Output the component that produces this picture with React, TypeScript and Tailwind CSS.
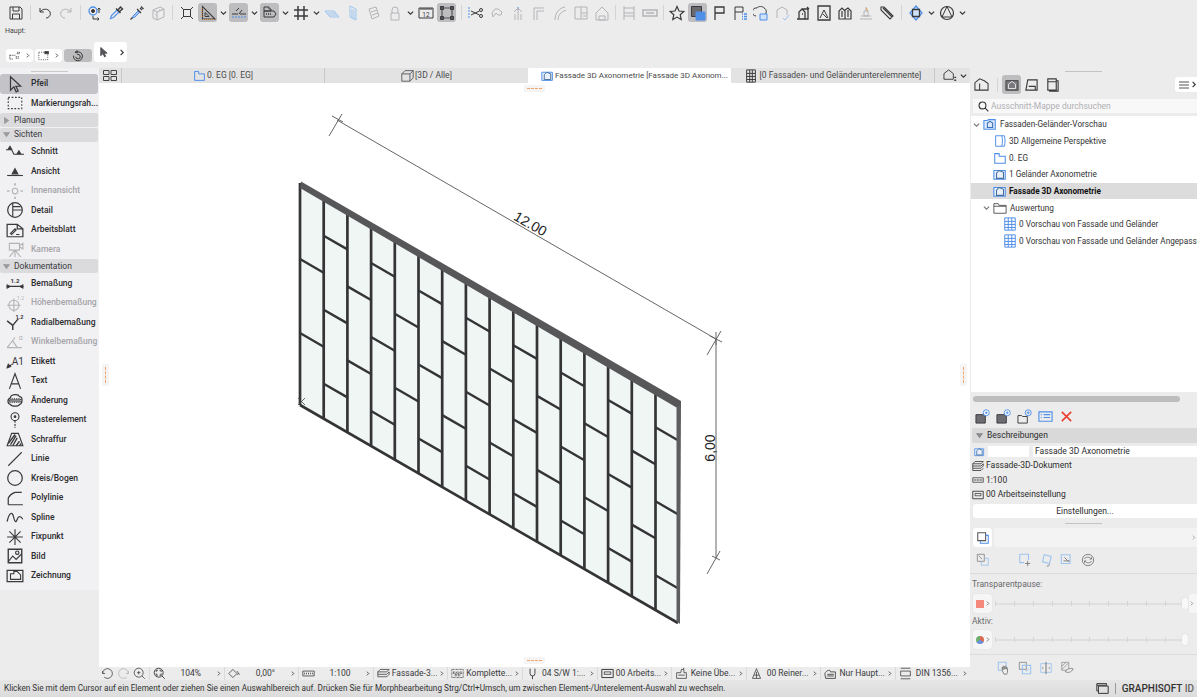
import React from 'react';

const DK = '#3a3a3c';
const BL = '#4f8fe8';
const LB = '#9cc3f0';
const GR = '#b4b4b8';

// toolbar + panel glyphs, all on a 16 grid
const ICONS: Record<string, React.ReactNode> = {
  save: <path d="M2 2h10l2 2v10H2z M5 2v4h6V2 M4.5 14V9h7v5" />,
  undo: <path d="M3 3v4h4 M3 7c2.500-3.500 8-4 10 0 1.200 3-1 6-4 6" />,
  redo: <path stroke={GR} d="M13 3v4H9 M13 7c-2.500-3.500-8-4-10 0-1.200 3 1 6 4 6" />,
  pick: <><circle cx="6" cy="6" r="4" stroke={BL} strokeWidth="1.300" /><circle cx="6" cy="6" r="1.500" fill={DK} /><path d="M12 3v5 M10.500 4.500L12 3l1.500 1.500 M6 11v3h6 M10.500 12.500L12 14l-1.500 1.500" /></>,
  dropper: <><path d="M2.500 13.500l1-3 5.500-5.500 2 2-5.500 5.500z" stroke={BL} strokeWidth="1.200" /><path d="M8 3.500l4.500 4.500 M10 5l2.500-3 2 2-3 2.500" strokeWidth="1.400" /></>,
  syringe: <><path d="M4 11l5-5 1.500 1.500-5 5-2 .5z" fill={LB} stroke={BL} /><path d="M1.500 14.500l2-2 M8 4l4 4 M11 3l2 2 M12 1.500l2.500 2.500" strokeWidth="1.200" /></>,
  box3d: <g stroke={GR}><path d="M3 5l7-3 4 2v8l-7 3-4-2z M3 5l4 2v8 M7 7l7-3" /><path d="M5 9l2 2 M9 5h3" strokeDasharray="1 1" /></g>,
  target: <path d="M4.500 4.500h7v7h-7z M2 2l3 3 M14 2l-3 3 M2 14l3-3 M14 14l-3-3" />,
  setsq: <><path d="M2.500 1.500v12.500H15z" strokeWidth="1.100" /><path d="M5 7.500v4h4.200z" /><path d="M3 14.500h11 M2 3v10" stroke="#e69a4a" strokeDasharray="1 1" /></>,
  guide: <><path d="M1 9h6 M9 9h6 M5 6l3-3 M8 9l3-4" /><path d="M1 12h14" stroke={BL} strokeDasharray="2 1" /></>,
  layer: <><path d="M2 2h5v2h2v2H2z M2 6h10l2 3-2 3H2z" /><path d="M4 9h5" strokeWidth="1.500" strokeDasharray="1 1" /></>,
  grid: <path d="M5 1v14 M11 1v14 M1 5h14 M1 11h14" strokeWidth="1.500" />,
  plane: <path stroke={LB} d="M1 6h9l5 6H6z M3 8h9 M5 10h8" />,
  wall: <path stroke={LB} d="M5 1l6 3v11l-6-3z M7 4v9 M9 5v9" />,
  hatch: <path stroke={GR} d="M3 4l7-2 3 9-7 3z M5 7l6-2 M6 10l6-2" />,
  lock: <path stroke={GR} d="M5 8V5a3 3 0 0 1 6 0v3 M4 8h8v7H4z" />,
  ruler: <><path d="M1 3h14v10H1z" /><path d="M3 3v2 M5 3v2 M7 3v2 M9 3v2 M11 3v2 M13 3v2" /><text x="8" y="12" textAnchor="middle" fontSize="6.500" fill={DK} stroke="none">12</text></>,
  nodes: <><path d="M3 3h10v10H3z" stroke="#55555a" strokeWidth="1.200" /><path d="M1.500 1.500h3v3h-3z M11.500 1.500h3v3h-3z M1.500 11.500h3v3h-3z M11.500 11.500h3v3h-3z" fill="#55555a" /></>,
  scissors: <><path d="M1 2v12" stroke={BL} strokeDasharray="2 1" /><circle cx="13" cy="5" r="1.500" /><circle cx="13" cy="11" r="1.500" /><path d="M3 6l8.500 4 M3 10l8.500-4" /></>,
  wand: <path stroke={GR} d="M3 8l3-4h3l4 3-1 3H9L7 8 4 12z" />,
  trim: <><path d="M8 2v3" stroke={BL} /><path stroke={GR} d="M4 7l4-4 4 4 M8 4v11 M5 9v6 M11 9v6" /></>,
  corner: <path stroke={GR} d="M3 15V3h10 M6 15V6h7" />,
  curve: <path stroke={GR} d="M3 15C3 8 7 3 13 2 M6 15c0-5 3-8 8-10" />,
  split: <path stroke={GR} d="M2 2h12v12H2z M8 2v12 M8 8h6 M10 11h3" />,
  house: <path stroke={GR} d="M2 8l6-6 6 6v7H2z M5 11h6v4H5z" />,
  beam: <path stroke={GR} d="M3 1v14 M13 1v14 M3 3h10 M3 11h10 M3 8h10" />,
  slab: <path stroke={GR} d="M1 5h14v6H1z M4 8h8" strokeWidth="1.500" />,
  star: <path d="M8 1.500l2 4.500 4.800.5-3.600 3.200 1 4.800L8 12.100 3.800 14.500l1-4.800L1.200 6.500 6 6z" strokeWidth="1.200" />,
  layers2: <><path d="M1.500 1.500h10v10h-10z" fill="#6a6a6e" stroke="#3a3a3c" /><path d="M6 7h9v8H6z" fill={BL} stroke={BL} /></>,
  flag: <path d="M4 15V2h9v6H4" strokeWidth="1.300" />,
  flist: <><path d="M3 15V2h8v5H3" /><path d="M10 9h1 M12 9h3 M10 11.500h1 M12 11.500h3 M10 14h1 M12 14h3" stroke={BL} strokeWidth="1.500" /></>,
  bubble: <><path d="M3 11a4 4 0 0 1 1-8c1-2 6-2 7 0 3 1 3 6 0 8" /><path d="M7 9h7v6H7z" fill="#cfe2fa" stroke={BL} /></>,
  bubble2: <><path stroke={GR} d="M3 13V5l5-3 5 3v5" /><path stroke={LB} d="M9 13l2 2 4-5" /></>,
  stack: <path d="M4 14V7l3-3 3 3v7z M7 4h6v10h-3 M2 14h11 M7 9h1 M12 2l2 2" strokeWidth="1.300" />,
  frame: <><path d="M2 1h12v14H2z" strokeWidth="1.300" /><path d="M4 13l4-8 4 8 M7 9l4 4" /></>,
  stairs: <path d="M2 14V6l3-3 3 3v8z M8 14V5l3-2 3 3v8H2 M5 6v6 M11 5v7" strokeWidth="1.200" />,
  robot: <g stroke={GR}><path d="M8 2v4 M6 6h4v5H6z M2 14h12 M3 11h10" /><path d="M8 3l2 3" stroke="#e69a4a" /></g>,
  tag: <path d="M2 5V2h3l9 9-3 3z M4 3l9 9 M6 3l8 8" strokeWidth="1.100" />,
  shade: <><path d="M8 1l6 7-6 7-6-7z" stroke={BL} strokeWidth="1.300" fill="#cfe2fa" /><path d="M4.500 4.500h7v7h-7z" strokeWidth="1.300" /></>,
  globe: <><circle cx="8" cy="8" r="6.500" strokeWidth="1.200" /><path d="M8 1.500L3 12 M8 1.500L13 12 M3 12h10" /></>,
  arrow: <path fill="#5a5a5e" stroke="#3a3a3c" d="M5 2v11l3-3 2 4.500 1.500-.7-2-4.300h4z" />,
  cur: <path d="M4 1.500v12l3-3 2 4.500 1.800-.8-2-4.200h4.200z" strokeWidth="1.100" />,
  marq: <path d="M2 3h12v10H2z" strokeDasharray="1.500 1.500" />,
  pill1: <path strokeWidth="1.200" d="M1 7h8 M1 12h5 M1 7v5 M11 3h3v2h-3z M9 9h5 M9 11h5" strokeDasharray="1.500 1" />,
  pill2: <><path d="M1 3h12v10H1z" strokeDasharray="1.500 1.500" /><path d="M9 2h5v3H9z" fill={DK} /></>,
  swirl: <path strokeWidth="1.300" d="M4 3l3-2v3z M7 2.500a6 6 0 1 1-5 5 M7 6a3 3 0 1 1-2 3" />,
  schnitt: <><path d="M0 6h5l2 4h9" /><path d="M2 5.500h3L3.500 3z M10 9.500h3L11.500 7z" fill={DK} /></>,
  ansicht: <><path d="M1 12h14" /><path d="M5.500 10.500h5L8 6z" fill={DK} /></>,
  innen: <g stroke={GR}><circle cx="8" cy="8" r="2.500" /><path d="M8 1v2 M8 13v2 M1 8h2 M13 8h2" strokeWidth="1.500" /></g>,
  detail: <><circle cx="8" cy="8" r="6.500" strokeWidth="1.100" /><path d="M6 1.800v12.400 M6 8h8 M6 5h7" /></>,
  sheet: <><path d="M1 3h9l5 4v7H1z M10 3v4h5" strokeWidth="1.100" /><path d="M4 11l4-4 1 1-4 4z M9 12h3" /></>,
  camera: <g stroke={GR}><path d="M3 3h9v6H3z M12 5l3-2v5l-3-2 M8 9L3 15 M8 9l5 6 M8 9v6" /></g>,
  bem: <><path d="M1 11h14 M1 9v4 M15 9v4 M3 10l-2 1 2 1 M13 10l2 1-2 1" /><text x="8" y="8" textAnchor="middle" fontSize="5.500" fontWeight="700" fill={DK} stroke="none">1.2</text></>,
  hoehe: <g stroke={GR}><circle cx="7" cy="10" r="4.500" /><path d="M7 4v12 M1 10h12" /><text x="13" y="5" textAnchor="middle" fontSize="4.500" fill={GR} stroke="none">1.2</text></g>,
  radial: <><path d="M1 7l5 4 M6 11l5-6 M6 11v4" strokeWidth="1.300" /><text x="12" y="5" textAnchor="middle" fontSize="5" fontWeight="700" fill={DK} stroke="none">1.2</text></>,
  winkel: <g stroke={GR}><path d="M1 13h13 M1 13L8 4 M6 7l4 6" /><text x="13" y="6" textAnchor="middle" fontSize="6" fill={GR} stroke="none">α</text></g>,
  etikett: <><path d="M1 14l4-3 M1 14l1-3 2 2z" fill={DK} /><text x="10.500" y="11.500" textAnchor="middle" fontSize="9" fill={DK} stroke="none">A1</text></>,
  aText: <path d="M3 15L8 1.500 13 15 M5 10.500h6" />,
  aend: <><path d="M4 12c-3-1-3-5 0-6 0-3 7-4 8-1 3 0 3 6 0 7-1 2-7 2-8 0z" strokeWidth="1.100" /><path d="M3 7h10v3H3z" fill="#8a8a8e" strokeDasharray="1 1" /></>,
  raster: <><circle cx="8" cy="5" r="3.500" /><path d="M8 8.500V15" strokeDasharray="2 1" /><circle cx="8" cy="5" r=".7" fill={DK} /></>,
  schraff: <><path d="M5 3h6l4 11H1z" /><path d="M2 12l6-8 M4 13l5-8 M6 14l4-7 M9 14l3-4 M12 14l1.500-2" strokeWidth="1.200" /></>,
  linie: <path d="M2 14L14 2" />,
  kreis: <circle cx="8" cy="8" r="6.500" strokeWidth="1.100" />,
  poly: <path d="M2 14V8c1-2 3-4 6-5h6 M2 14h13" strokeWidth="1.100" />,
  spline: <path d="M1 12c2-9 5-9 6-3 1 4 2 4 3 1 1-3 3-3 5 0" strokeWidth="1.100" />,
  fix: <path d="M8 1v14 M1 8h14 M3 3l10 10 M13 3L3 13" />,
  bild: <><path d="M2 2h12v12H2z" strokeWidth="1.200" /><path d="M2 13l4-5 3 3 5-5" /><circle cx="10" cy="5" r="1.500" /></>,
  zeich: <><path d="M1 3h14v10H1z" strokeWidth="1.100" /><path d="M4 11V6h3V4h3l3 3v4z" /></>,
  fsq: <path stroke={BL} strokeWidth="1.100" d="M3 2h10c1 3 1 9 0 12H3z M10 2c1 3 1 9 0 12" />,
  plan: <path stroke={BL} strokeWidth="1.200" d="M2 3h5v3h7v8H2z" />,
  fold3d: <g stroke={BL} strokeWidth="1.200"><path d="M1 4h4l1-1h8v11H1z" fill="#dbe9fb" /><path d="M5 12V7l3-2 3 2v5z" stroke="#3a6fb8" /></g>,
  house2: <g stroke={BL} strokeWidth="1.200"><path d="M1 4h13v10H1z" fill="#e7f0fc" /><path d="M4 13V7l3-3 5 2v7z" stroke="#4a6f98" /></g>,
  folder: <path strokeWidth="1.100" stroke="#5a5a5e" d="M1 3h5l1 2h8v9H1z M1 6h14" />,
  table: <path stroke={BL} strokeWidth="1.100" d="M2 1h12v14H2z M2 5h12 M2 8.500h12 M2 12h12 M6 1v14 M10 1v14" />,
  tabTable: <path strokeWidth="1.100" d="M3 1h10v14H3z M3 5h10 M3 8.500h10 M3 12h10 M6.500 1v14 M9.500 1v14" />,
  tabBox: <path stroke="#55555a" strokeWidth="1.100" d="M1 6l4-4h10v9l-4 4H1z M1 6h10v9 M11 6l4-4" />,
  tabHouse: <><path d="M1 12V6l5-4 5 4v6z" strokeWidth="1" /><path d="M12 10h2 M12 13h2" strokeWidth="1.500" /></>,
  ftab1: <path d="M1 14V6l5-4 5 2 4 3v7z M6 14V7" strokeWidth="1.100" />,
  ftab2: <><path d="M1 3h14v11H1z" fill="#7a7a7e" stroke="#3a3a3c" /><path d="M4 12V7l4-3 4 3v5z" stroke="#eee" /></>,
  ftab3: <path strokeWidth="1.200" d="M2 14l2-11h10v11z M5 10h7v4" />,
  ftab4: <path strokeWidth="1.200" d="M3 2h9v12H3z M3 5h9 M12 4h2v11H5v-1" />,
  viewAdd: <><path d="M1 6h10v9H1z" fill="#6e6e72" stroke="#3a3a3c" /><circle cx="12" cy="4" r="3.200" stroke={BL} fill="#fff" /><path d="M12 2.500v3 M10.500 4h3" stroke={BL} /></>,
  folderAdd: <><path d="M1 7h4l1 1h5v7H1z" /><circle cx="12" cy="4" r="3.200" stroke={BL} /><path d="M12 2.500v3 M10.500 4h3" stroke={BL} /></>,
  listBox: <path stroke={BL} strokeWidth="1.200" d="M1 3h14v10H1z M3 6h1 M6 6h7 M3 9h1 M6 9h7" />,
  redX: <path stroke="#e8402f" strokeWidth="1.700" d="M3 3l10 10 M13 3L3 13" />,
  stackDoc: <path strokeWidth="1.100" d="M1 5l3-3h11l-3 3z M1 5v3h11l3-3 M1 8v3h11l3-3v-3 M1 11v3h11l3-3" />,
  scale: <><path d="M1 5h14v6H1z" /><path d="M3 7v2 M5 7v2 M7 7v2 M9 7v2 M11 7v2 M13 7v2" /></>,
  workset: <><path d="M1 3h14v10H1z" strokeWidth="1.200" /><path d="M4 6h8v3H4z" /></>,
  copyDoc: <><path d="M2 2h9v9H2z" stroke="#555" strokeWidth="1.200" fill="#fff" /><path d="M11 5h3v9H5v-3" stroke={BL} strokeWidth="1.200" /></>,
  transf1: <><path d="M1.500 1.500h8v8h-8z" stroke="#8a8a8e" /><path d="M3 3l4 4" stroke="#8a8a8e" /><path d="M9.500 6h4.500v8H6v-4.500" stroke={LB} /></>,
  moveDoc: <><path d="M2 1.500h10V8M2 1.500V11h5" stroke={LB} strokeWidth="1.200" /><path d="M11 9v6 M8 12h6" stroke="#777" /></>,
  rotDoc: <><path d="M6 2l8 2-2 8-8-2z" stroke={LB} strokeWidth="1.200" /><path d="M9 15c2 0 3-1 3-2" stroke="#777" /></>,
  scaleDoc: <><path d="M1.500 2h10v10h-10z" stroke={LB} strokeWidth="1.200" /><path d="M5 5l5 5 M4 9l7 0" stroke="#777" /></>,
  sync: <g stroke="#777"><circle cx="8" cy="8" r="6.500" /><path d="M4 7c1-3 6-3 8 0 M12 9c-1 3-6 3-8 0 M12 5v2h-2 M4 11V9h2" /></g>,
  hand: <><path d="M1.500 1.500h9v9h-9z" stroke={LB} strokeWidth="1.200" /><path d="M8 15l-2-4V7l1 3V6h1v3h1V6h1v3h1V7l1 2v4l-1 2z" stroke="#777" fill="#eee" /></>,
  dup: <><path d="M1.500 1.500h8v8h-8z" stroke="#888" /><path d="M5 5h9.500v9.500H5z" stroke={LB} strokeWidth="1.200" /><path d="M8 10l2 1.500 2-3" stroke={LB} /></>,
  mirror: <><path d="M2 3h12v10H2z" stroke={LB} /><path d="M8 1v14" stroke="#666" /><path d="M5 8l-1.500 0 M11 8h1.500" stroke="#666" /></>,
  erase: <><path d="M2 1.500h8v9H2z M2 6l5-4.500 M2 10l8-8" stroke="#999" /><path d="M6 12c3-4 7-4 9-3-2 4-6 5-9 3z" stroke="#777" fill="#eee" /></>,
  navUndo: <path stroke="#444" d="M2 8a6 6 0 1 1 2 4.500 M2 5v3h3" />,
  navRedo: <path stroke={GR} d="M14 8a6 6 0 1 0-2 4.500 M14 5v3h-3" />,
  zoomIn: <path stroke="#444" d="M7 1.500a5.500 5.500 0 1 1 0 11 5.500 5.500 0 0 1 0-11 M11 11l3.500 3.500 M5 7h4 M7 5v4" />,
  zoomFit: <path stroke="#444" strokeWidth="1.200" d="M7 1.500a5.500 5.500 0 1 1 0 11 5.500 5.500 0 0 1 0-11 M11 11l3.500 3.500 M4 6V4h2 M10 6V4H8 M4 8v2h2 M10 8v2H8" />,
  angle: <path stroke="#444" d="M1 8l5-5 5 5-5 5z M11 5l2 3-1.500 2 M13 8l1.500 1" />,
  scaleSm: <path stroke="#444" d="M1 5h14v6H1z M3 7v2 M5.500 7v2 M8 7v2 M10.500 7v2 M13 7v2" />,
  layerSt: <path stroke="#444" d="M1 6l3-3h11l-3 3z M1 6v3h11l3-3 M1 9v3h11l3-3V6" />,
  pen: <path stroke="#333" d="M1 3h14v10H1z M3 6h2v2H3z M7 6h2v2H7z M11 6h2v2h-2z M5 9h2v2H5z M9 9h2v2H9z" strokeDasharray="1 .7" />,
  pensw: <path stroke="#444" strokeWidth="1.200" d="M5 2v6a3 3 0 0 0 6 0V2 M8 11v4" />,
  rename: <path stroke="#444" d="M2 7h5l1-4 3 0v4h3v7H2z M4 10h8 M11 1l-1 2" />,
  renov: <path stroke="#444" d="M3 14L8 2l5 12z M5 10h6 M8 6v8" />,
  navLay: <path stroke="#444" strokeWidth="1.100" d="M1 8c2-4 5-4 6-4l1 2h6v8H2z M4 9h8 M4 11h8" />,
  din: <path stroke="#444" d="M2 1.500h12 M2 14.500h12 M2 5h12v6H2z" />,
  windows: <path stroke="#333" strokeWidth="1.200" d="M1 2h12v2H1z M3 5h12v9H3z M1 4v7h2" />,
};

const Ic = ({ n, s = 16, cls = 'text-[#3a3a3c]' }: { n: string; s?: number; cls?: string }) => (
  <svg width={s} height={s} viewBox="0 0 16 16" fill="none" stroke="currentColor" strokeWidth="1" className={`shrink-0 ${cls}`}>
    {ICONS[n]}
  </svg>
);

const Chev = ({ dir = 'r', cls = 'text-[#333]' }: { dir?: 'r' | 'd' | 'tr' | 'td'; cls?: string }) => (
  <svg width="7" height="7" viewBox="0 0 8 8" fill="none" stroke="currentColor" strokeWidth="1.300" className={`shrink-0 ${cls}`}>
    {dir === 'r' && <path d="M3 1l3 3-3 3" />}
    {dir === 'd' && <path d="M1 3l3 3 3-3" />}
    {dir === 'tr' && <path d="M2 1l4 3-4 3z" fill="currentColor" />}
    {dir === 'td' && <path d="M1 2l3 4 3-4z" fill="currentColor" />}
  </svg>
);

type TB = { t: 'i' | 'a' | 'c' | 's' | 'n'; n?: string };
const toolbar: TB[] = [
  { t: 'i', n: 'save' }, { t: 's' }, { t: 'i', n: 'undo' }, { t: 'i', n: 'redo' }, { t: 's' },
  { t: 'i', n: 'pick' }, { t: 'i', n: 'dropper' }, { t: 'i', n: 'syringe' }, { t: 'i', n: 'box3d' }, { t: 's' },
  { t: 'i', n: 'target' }, { t: 'a', n: 'setsq' }, { t: 'c' }, { t: 'a', n: 'guide' }, { t: 'c' }, { t: 'a', n: 'layer' }, { t: 'c' },
  { t: 'i', n: 'grid' }, { t: 'c' }, { t: 'i', n: 'plane' }, { t: 'i', n: 'wall' }, { t: 'i', n: 'hatch' }, { t: 'i', n: 'lock' }, { t: 'c' },
  { t: 'i', n: 'ruler' }, { t: 'a', n: 'nodes' }, { t: 's' },
  { t: 'i', n: 'scissors' }, { t: 'i', n: 'wand' }, { t: 'i', n: 'trim' }, { t: 'i', n: 'corner' }, { t: 'i', n: 'curve' }, { t: 'i', n: 'split' }, { t: 'i', n: 'house' }, { t: 'n' },
  { t: 'i', n: 'beam' }, { t: 'i', n: 'slab' }, { t: 'n' },
  { t: 'i', n: 'star' }, { t: 'a', n: 'layers2' }, { t: 'i', n: 'flag' }, { t: 'i', n: 'flist' }, { t: 'i', n: 'bubble' }, { t: 'i', n: 'bubble2' }, { t: 'i', n: 'stack' }, { t: 'i', n: 'frame' }, { t: 'i', n: 'stairs' }, { t: 'i', n: 'robot' }, { t: 'i', n: 'tag' }, { t: 's' },
  { t: 'i', n: 'shade' }, { t: 'c' }, { t: 'i', n: 'globe' }, { t: 'c' },
];

type Tool = { h?: boolean; open?: boolean; label: string; icon?: string; off?: boolean; sel?: boolean };
const tools: Tool[] = [
  { label: 'Pfeil', icon: 'cur', sel: true },
  { label: 'Markierungsrah...', icon: 'marq' },
  { label: 'Planung', h: true },
  { label: 'Sichten', h: true, open: true },
  { label: 'Schnitt', icon: 'schnitt' },
  { label: 'Ansicht', icon: 'ansicht' },
  { label: 'Innenansicht', icon: 'innen', off: true },
  { label: 'Detail', icon: 'detail' },
  { label: 'Arbeitsblatt', icon: 'sheet' },
  { label: 'Kamera', icon: 'camera', off: true },
  { label: 'Dokumentation', h: true, open: true },
  { label: 'Bemaßung', icon: 'bem' },
  { label: 'Höhenbemaßung', icon: 'hoehe', off: true },
  { label: 'Radialbemaßung', icon: 'radial' },
  { label: 'Winkelbemaßung', icon: 'winkel', off: true },
  { label: 'Etikett', icon: 'etikett' },
  { label: 'Text', icon: 'aText' },
  { label: 'Änderung', icon: 'aend' },
  { label: 'Rasterelement', icon: 'raster' },
  { label: 'Schraffur', icon: 'schraff' },
  { label: 'Linie', icon: 'linie' },
  { label: 'Kreis/Bogen', icon: 'kreis' },
  { label: 'Polylinie', icon: 'poly' },
  { label: 'Spline', icon: 'spline' },
  { label: 'Fixpunkt', icon: 'fix' },
  { label: 'Bild', icon: 'bild' },
  { label: 'Zeichnung', icon: 'zeich' },
];

const tree = [
  { pl: 'pl-[2px]', chev: true, icon: 'fold3d', label: 'Fassaden-Geländer-Vorschau' },
  { pl: 'pl-[22px]', icon: 'fsq', label: '3D Allgemeine Perspektive' },
  { pl: 'pl-[22px]', icon: 'plan', label: '0. EG' },
  { pl: 'pl-[22px]', icon: 'house2', label: '1 Geländer Axonometrie' },
  { pl: 'pl-[22px]', icon: 'house2', label: 'Fassade 3D Axonometrie', sel: true },
  { pl: 'pl-[12px]', chev: true, icon: 'folder', label: 'Auswertung' },
  { pl: 'pl-[32px]', icon: 'table', label: '0 Vorschau von Fassade und Geländer' },
  { pl: 'pl-[32px]', icon: 'table', label: '0 Vorschau von Fassade und Geländer Angepasst' },
];

const segs = [
  { icon: 'zoomFit', label: '104%' },
  { icon: 'angle', label: '0,00°' },
  { icon: 'scaleSm', label: '1:100' },
  { icon: 'layerSt', label: 'Fassade-3...' },
  { icon: 'pen', label: 'Komplette...' },
  { icon: 'pensw', label: '04 S/W 1:...' },
  { icon: 'workset', label: '00 Arbeits...' },
  { icon: 'rename', label: 'Keine Übe...' },
  { icon: 'renov', label: '00 Reiner...' },
  { icon: 'navLay', label: 'Nur Haupt...' },
  { icon: 'din', label: 'DIN 1356...' },
];

const Handle = ({ cls, v }: { cls: string; v?: boolean }) => (
  <div className={`absolute rounded-[2px] bg-[#f6f4f2] flex items-center justify-center ${cls}`}>
    <div className={v ? 'h-full w-0 border-l border-dashed border-[#f0a870]' : 'w-full h-0 border-t border-dashed border-[#f0a870]'} />
  </div>
);

const Slider = ({ swatch }: { swatch: React.ReactNode }) => (
  <div className="h-[19px] flex items-center pl-[3px]">
    <div className="w-[19px] h-[19px] bg-[#f6f6f6] rounded-[3px] flex items-center justify-center gap-[1px] shadow-[0_0_1px_#ccc]">
      {swatch}
      <Chev cls="text-[#666] w-[5px] h-[5px]" />
    </div>
    <div className="relative ml-[3px] w-[190px] h-[2px] bg-[#dfdfdf] flex justify-between">
      {[0, 1, 2, 3, 4, 5, 6, 7, 8, 9, 10].map(i => <span key={i} className="w-[1px] h-[5px] -mt-[1.5px] bg-[#d4d4d4]" />)}
      <span className="absolute right-[-3px] top-[-5px] w-[6px] h-[11px] rounded-[2px] bg-[#f8f8f8] shadow-[0_0_1px_#bbb]" />
    </div>
  </div>
);

function Facade() {
  const top = (x: number) => 183 + 0.5775 * (x - 300);
  const cols = Array.from({ length: 17 }, (_, i) => 300 + i * 23.7);
  return (
    <svg viewBox="99 83 871 584" className="block w-full h-full">
      <polygon points="300,186 679,405 679,624 300,405" fill="#eff6f4" />
      {cols.slice(0, 16).map(x => (
        <line key={x} x1={x} y1={top(x)} x2={x} y2={405 + 0.5775 * (x - 300)} stroke="#343436" strokeWidth="2.700" />
      ))}
      {cols.slice(0, 16).map((x, i) =>
        (i % 2 ? [39, 113, 187] : [76, 150]).map(off => (
          <line key={x + '-' + off} x1={x} y1={top(x) + off} x2={x + 23.7} y2={top(x + 23.7) + off} stroke="#343436" strokeWidth="2.400" />
        )),
      )}
      <line x1="300" y1="405" x2="678" y2="623" stroke="#343436" strokeWidth="2.600" />
      <polygon points="676.500,406 681,402 680,624 676.500,621" fill="#5e5e60" />
      <polygon points="301,181.500 681,401 681,403 676.500,407.500 300,188" fill="#57575a" />
      <path d="M298 398l7 7 M305 398l-7 7" stroke="#444" strokeWidth="0.800" fill="none" />
      <g stroke="#666" strokeWidth="1" fill="none">
        <path d="M337 120L716 339 M716 339V558" />
        <path d="M329 136L342 114 M332 116L343 122" />
        <path d="M707 355L721 331 M710 336L722 342 M716 332V345" />
        <path d="M707 574L720 551 M712 556L720 560" />
      </g>
      <text x="528" y="228" transform="rotate(30 528 228)" textAnchor="middle" fontSize="14" fontFamily="Liberation Sans, sans-serif" fill="#222">12.00</text>
      <text x="715" y="448" transform="rotate(-90 715 448)" textAnchor="middle" fontSize="14" fontFamily="Liberation Sans, sans-serif" fill="#222">6,00</text>
    </svg>
  );
}

export default function App() {
  return (
    <div className="w-[1197px] h-[697px] overflow-hidden flex flex-col bg-[#ececec] text-[#2c2c2e] text-[8.5px] font-[Roboto,sans-serif]">
      {/* Top toolbars */}
      <div className="h-[68px] shrink-0 flex flex-col">
        <div className="h-[25px] flex items-center pl-[5px]">
          {toolbar.map((b, i) => {
            if (b.t === 's') return <div key={i} className="w-[8px] flex justify-center"><div className="w-[1px] h-[15px] bg-[#d4d4d4]" /></div>;
            if (b.t === 'n') return <div key={i} className="w-[6px] flex justify-center"><div className="w-[1px] h-[15px] bg-[#d4d4d4]" /></div>;
            if (b.t === 'c') return <div key={i} className="w-[10px] h-[19px] flex items-center justify-center"><Chev dir="d" /></div>;
            if (b.t === 'a') return <div key={i} className="w-[21px] flex justify-end pr-[1px]"><div className="w-[19px] h-[19px] rounded-[3px] bg-[#bdbdbf] flex items-center justify-center"><Ic n={b.n!} /></div></div>;
            return <div key={i} className="w-[21px] flex justify-center"><Ic n={b.n!} /></div>;
          })}
        </div>
        <div className="h-[12px] pl-[5px] flex items-center text-[7px] text-[#444]">Haupt:</div>
        <div className="mt-[5px] h-[20px] pl-[6px] flex items-end gap-[2px]">
          <div className="w-[27px] h-[13px] rounded-[3px] bg-white flex items-center justify-between px-[3px]"><Ic n="pill1" s={12} /><Chev cls="text-[#333] w-[5px] h-[5px]" /></div>
          <div className="w-[27px] h-[13px] rounded-[3px] bg-white flex items-center justify-between px-[3px]"><Ic n="pill2" s={12} /><Chev cls="text-[#333] w-[5px] h-[5px]" /></div>
          <div className="w-[28px] h-[13px] rounded-[3px] bg-[#bdbdbf] flex items-center justify-center"><Ic n="swirl" s={12} cls="text-[#333]" /></div>
          <div className="w-[33px] h-[20px] rounded-[3px] bg-white flex items-center justify-center gap-[9px] pl-[1px]"><Ic n="arrow" s={12} /><Chev /></div>
        </div>
      </div>

      <div className="flex-1 flex min-h-0">
        {/* Left toolbox */}
        <div className="w-[99px] shrink-0 flex flex-col">
          <div className="h-[522px] bg-[#f1f0f2] flex flex-col">
            <div className="h-[6px] flex justify-center items-start pt-[2.500px]"><div className="w-[37px] h-[1px] bg-[#c9c9c9]" /></div>
            <div className="flex flex-col pr-[1px]">
              {tools.map(t => t.h ? (
                <div key={t.label} className="h-[14px] mb-[0.500px] bg-[#dbdadc] rounded-[2px] flex items-center text-[#3a3a3c]">
                  <div className="w-[14px] pl-[3px]"><Chev dir={t.open ? 'td' : 'tr'} cls="text-[#9a9a9e]" /></div>
                  <span>{t.label}</span>
                </div>
              ) : (
                <div key={t.label} className={`h-[19.500px] flex items-center pl-[5px] ${t.sel ? 'bg-[#c4c3c7] rounded-[3px]' : ''}`}>
                  <div className="w-[20px] shrink-0 flex justify-center"><Ic n={t.icon!} s={18} cls={t.off ? 'text-[#b4b4b8]' : 'text-[#3a3a3c]'} /></div>
                  <span className={`ml-[6px] font-medium whitespace-nowrap ${t.off ? 'text-[#a5a5a9]' : 'text-[#2c2c2e]'}`}>{t.label}</span>
                </div>
              ))}
            </div>
          </div>
        </div>

        {/* Centre: tabs, canvas, status row */}
        <div className="w-[871px] shrink-0 flex flex-col">
          <div className="h-[15px] flex bg-[#e3e3e3] text-[#4a4a4c]">
            <div className="w-[23px] flex items-center justify-center border-r border-[#c8c8c8]">
              <svg width="14" height="11" viewBox="0 0 14 11" fill="none" stroke="#444"><path d="M.5.5h5.500v4H.5z M8 .5h5.500v4H8z M.5 6.500h5.500v4H.5z M8 6.500h5.500v4H8z" /></svg>
            </div>
            <div className="w-[203px] flex items-center justify-center gap-[1px] border-r border-[#c8c8c8]"><Ic n="plan" s={13} /><span>0. EG [0. EG]</span></div>
            <div className="w-[203px] flex items-center justify-center gap-[1px]"><Ic n="tabBox" s={13} /><span>[3D / Alle]</span></div>
            <div className="w-[203px] flex items-center gap-[1px] pl-[13px] bg-white"><Ic n="house2" s={13} /><span className="whitespace-nowrap text-[8px]">Fassade 3D Axonometrie [Fassade 3D Axonom...</span></div>
            <div className="w-[204px] flex items-center justify-center gap-[2px] border-r border-[#c8c8c8]"><Ic n="tabTable" s={14} /><span className="whitespace-nowrap">[0 Fassaden- und Geländerunterelemnente]</span></div>
            <div className="flex-1 flex items-center justify-end gap-[2px] pr-[3px]"><Ic n="tabHouse" s={15} /><Chev dir="d" /></div>
          </div>
          <div className="h-[584px] relative bg-white">
            <Facade />
            <Handle cls="left-[425px] top-[2px] w-[21px] h-[7px] px-[3px]" />
            <Handle cls="left-[425px] bottom-[3px] w-[21px] h-[7px] px-[3px]" />
            <Handle cls="left-[3px] top-[281px] w-[7px] h-[22px] py-[3px]" v />
            <Handle cls="right-[3px] top-[281px] w-[7px] h-[22px] py-[3px]" v />
          </div>
          <div className="h-[13px] flex text-[#3a3a3c] whitespace-nowrap">
            <div className="w-[50px] flex"><Ic n="navUndo" s={13} cls="mx-[1.500px]" /><Ic n="navRedo" s={13} cls="mx-[1.500px]" /><Ic n="zoomIn" s={13} cls="mx-[1.500px]" /></div>
            {segs.map(s => (
              <div key={s.label} className="w-[74.600px] flex items-center border-l border-[#dadada]">
                <Ic n={s.icon} s={13} cls="ml-[3px]" />
                <span className="flex-1 text-center">{s.label}</span>
                <Chev cls="text-[#333] mr-[3px] w-[5px] h-[5px]" />
              </div>
            ))}
          </div>
        </div>

        {/* Right navigator */}
        <div className="flex-1 flex flex-col min-w-0">
          <div className="h-[7px] flex justify-center pt-[3px]"><div className="w-[37px] h-[1px] bg-[#c4c4c4]" /></div>
          <div className="h-[19px] flex items-center">
            <div className="w-[23px] flex justify-center"><Ic n="ftab1" s={15} /></div>
            <div className="w-[1px] h-[14px] bg-[#d4d4d4] mx-[4px]" />
            <div className="w-[19px] h-[19px] rounded-[3px] bg-[#bdbdbf] flex items-center justify-center"><Ic n="ftab2" s={14} /></div>
            <div className="w-[21px] flex justify-center"><Ic n="ftab3" s={15} /></div>
            <div className="w-[21px] flex justify-center"><Ic n="ftab4" s={15} /></div>
            <div className="ml-auto w-[22px] h-[15px] bg-white rounded-l-[3px] flex items-center gap-[1px] pl-[4px]"><svg width="10" height="8" viewBox="0 0 10 8" stroke="#555"><path d="M0 1h10 M0 4h10 M0 7h10" /></svg><Chev /></div>
          </div>
          <div className="mt-[5px] ml-[3px] h-[14px] bg-[#f8f8f8] flex items-center pl-[5px] text-[#b0b0b4]">
            <svg width="11" height="11" viewBox="0 0 16 16" fill="none" stroke="#333" strokeWidth="1.600"><circle cx="6.500" cy="6.500" r="5" /><path d="M10.500 10.500l4.500 4.500" /></svg>
            <span className="ml-[2px]">Ausschnitt-Mappe durchsuchen</span>
          </div>
          <div className="mt-[3px] ml-[1px] h-[276px] bg-white overflow-hidden text-[8.2px]">
            {tree.map(r => (
              <div key={r.label} className={`h-[16.700px] flex items-center whitespace-nowrap ${r.pl} ${r.sel ? 'bg-[#dcdcdc] font-bold text-[#111]' : 'text-[#333]'}`}>
                {r.chev && <div className="w-[10px] -ml-[2px] flex justify-center"><Chev dir="d" cls="text-[#777]" /></div>}
                <Ic n={r.icon} s={14} cls={r.chev ? 'mx-[2px]' : 'mr-[1px]'} />
                <span className="ml-[1px]">{r.label}</span>
              </div>
            ))}
          </div>
          <div className="mt-[4px] ml-[3px] w-[207px] h-[6px] rounded-full bg-[#bdbdbd]" />
          <div className="mt-[4px] h-[20px] flex items-center pl-[2px]">
            {['viewAdd', 'viewAdd', 'folderAdd', 'listBox', 'redX'].map((n, i) => (
              <div key={i} className="w-[21px] flex justify-center"><Ic n={n} s={15} /></div>
            ))}
          </div>
          <div className="mt-[2px] ml-[2px] h-[15px] bg-[#d9d9d9] flex items-center rounded-l-[2px]">
            <div className="w-[15px] pl-[4px]"><Chev dir="td" cls="text-[#8a8a8e]" /></div>
            <span>Beschreibungen</span>
          </div>
          <div className="mt-[3px] h-[11px] flex items-center">
            <div className="w-[18px] flex justify-center"><Ic n="house2" s={11} /></div>
            <div className="w-[41px] h-[11px] bg-white" />
            <div className="ml-[4px] flex-1 h-[11px] bg-white flex items-center pl-[2px] whitespace-nowrap">Fassade 3D Axonometrie</div>
          </div>
          <div className="mt-[1.500px] h-[14.500px] flex items-center pl-[2px]"><Ic n="stackDoc" s={12} /><span className="ml-[2px]">Fassade-3D-Dokument</span></div>
          <div className="h-[14.500px] flex items-center pl-[2px]"><Ic n="scale" s={12} /><span className="ml-[2px]">1:100</span></div>
          <div className="h-[14.500px] flex items-center pl-[2px]"><Ic n="workset" s={12} /><span className="ml-[2px]">00 Arbeitseinstellung</span></div>
          <div className="mt-[2px] ml-[3px] h-[14px] bg-white rounded-l-[3px] flex items-center justify-center">Einstellungen...</div>
          <div className="h-[10px] flex justify-center pt-[5px]"><div className="w-[37px] h-[1px] bg-[#c4c4c4]" /></div>
          <div className="h-[19px] flex pl-[3px]">
            <div className="w-[19px] h-[19px] bg-white rounded-[3px] flex items-center justify-center"><Ic n="copyDoc" s={14} /></div>
            <div className="ml-[2px] flex-1 bg-[#f3f3f3] rounded-l-[3px] flex items-center justify-end pr-[1px]"><Chev cls="text-[#999] w-[5px] h-[5px]" /></div>
          </div>
          <div className="h-[27px] flex items-center pl-[2px] border-b border-[#dcdcdc]">
            <div className="w-[21px] flex justify-center"><Ic n="transf1" s={14} /></div>
            <div className="w-[21px]" />
            {['moveDoc', 'rotDoc', 'scaleDoc', 'sync'].map(n => <div key={n} className="w-[21px] flex justify-center"><Ic n={n} s={14} /></div>)}
          </div>
          <div className="h-[20px] pl-[2px] flex items-center text-[#6a6a6c]">Transparentpause:</div>
          <div className="relative">
            <Slider swatch={<span className="w-[8px] h-[8px] bg-[#f58a7c]" />} />
            <div className="absolute right-0 top-0 w-[8px] h-[19px] bg-[#f6f6f6] rounded-l-[3px] flex items-center"><Chev cls="text-[#888] w-[5px] h-[5px]" /></div>
          </div>
          <div className="h-[16px] pl-[2px] flex items-center text-[#6a6a6c]">Aktiv:</div>
          <div className="mt-[1px]">
            <Slider swatch={<span className="w-[8px] h-[8px] rounded-full bg-[conic-gradient(#d9694f_0_33%,#6a8fd8_33%_66%,#6fae6f_66%)]" />} />
          </div>
          <div className="mt-[5px] h-[1px] bg-[#dcdcdc]" />
          <div className="h-[25px] flex items-center pl-[23px]">
            {['hand', 'dup', 'mirror', 'erase'].map(n => <div key={n} className="w-[21px] flex justify-center"><Ic n={n} s={14} /></div>)}
          </div>
        </div>
      </div>

      {/* Message bar */}
      <div className="h-[17px] shrink-0 bg-gradient-to-b from-[#e6e6e6] to-[#dcdcdc] flex items-center pl-[4px] pb-[1px] text-[#333] whitespace-nowrap">
        <span className="text-[8.2px]">Klicken Sie mit dem Cursor auf ein Element oder ziehen Sie einen Auswahlbereich auf. Drücken Sie für Morphbearbeitung Strg/Ctrl+Umsch, um zwischen Element-/Unterelement-Auswahl zu wechseln.</span>
        <div className="ml-auto flex items-center pr-[3px]">
          <Ic n="windows" s={13} />
          <div className="mx-[6px] w-[1px] h-[11px] bg-[#999]" />
          <span className="text-[10px] font-medium text-[#333]">GRAPHISOFT <span className="text-[#666]">ID</span></span>
        </div>
      </div>
    </div>
  );
}
